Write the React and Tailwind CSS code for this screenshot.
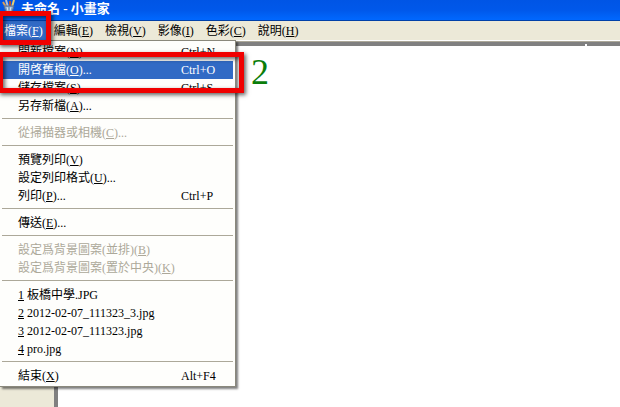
const MENUS = [
  { label: '檔案', hotkey: 'F' },
  { label: '編輯', hotkey: 'E' },
  { label: '檢視', hotkey: 'V' },
  { label: '影像', hotkey: 'I' },
  { label: '色彩', hotkey: 'C' },
  { label: '說明', hotkey: 'H' },
];

const FILE_GROUPS = [
  [
    { label: '開新檔案', hotkey: 'N', shortcut: 'Ctrl+N' },
    { label: '開啓舊檔', hotkey: 'O', more: true, shortcut: 'Ctrl+O', active: true },
    { label: '儲存檔案', hotkey: 'S', shortcut: 'Ctrl+S' },
    { label: '另存新檔', hotkey: 'A', more: true },
  ],
  [{ label: '從掃描器或相機', hotkey: 'C', more: true, disabled: true }],
  [
    { label: '預覽列印', hotkey: 'V' },
    { label: '設定列印格式', hotkey: 'U', more: true },
    { label: '列印', hotkey: 'P', more: true, shortcut: 'Ctrl+P' },
  ],
  [{ label: '傳送', hotkey: 'E', more: true }],
  [
    { label: '設定爲背景圖案(並排)', hotkey: 'B', disabled: true },
    { label: '設定爲背景圖案(置於中央)', hotkey: 'K', disabled: true },
  ],
  [
    { recent: '1', label: '板橋中學.JPG' },
    { recent: '2', label: '2012-02-07_111323_3.jpg' },
    { recent: '3', label: '2012-02-07_111323.jpg' },
    { recent: '4', label: 'pro.jpg' },
  ],
  [{ label: '結束', hotkey: 'X', shortcut: 'Alt+F4' }],
];

function PaintIcon() {
  return (
    <svg viewBox="0 0 16 16" className="size-4 shrink-0" aria-hidden="true">
      <path d="M2 2l3 5" stroke="#d9a05a" strokeWidth="2" />
      <path d="M5 0l2 7" stroke="#b8c4d0" strokeWidth="2" />
      <path d="M9 1v6" stroke="#b5532f" strokeWidth="2" />
      <path d="M13 0l-2 7" stroke="#e8cf72" strokeWidth="2" />
      <path d="M3 6h10l-2 6H5z" fill="#7fa3cc" stroke="#5a6f94" />
      <path d="M6 7l1 4M10 7l-1 4" stroke="#e6f0f8" />
    </svg>
  );
}

function Hotkey({ letter }) {
  return <>(<u className="underline-offset-1">{letter}</u>)</>;
}

function MenuItem({ item }) {
  const tone = item.active ? 'bg-[#316ac5] text-white' : item.disabled ? 'text-[#aca899]' : 'text-black';
  return (
    <button
      type="button"
      role="menuitem"
      disabled={item.disabled}
      className={`flex h-[18px] w-full items-center pr-5 pl-4 text-left ${tone}`}
    >
      <span className="flex-1">
        {item.recent && <><u className="underline-offset-1">{item.recent}</u>{' '}</>}
        {item.label}
        {item.hotkey && <Hotkey letter={item.hotkey} />}
        {item.more && '...'}
      </span>
      {item.shortcut && <span className="w-8">{item.shortcut}</span>}
    </button>
  );
}

function FileMenu() {
  return (
    <div
      role="menu"
      className="absolute top-full left-0 w-[236px] border border-l-0 border-[#8a887c] bg-[#fefefc] px-0.5 pt-0.5 pb-px shadow-[2px_2px_2px_#00000080]"
    >
      {FILE_GROUPS.map((group, i) => (
        <div key={i}>
          {i > 0 && <hr className="mt-[3px] mb-[5px] border-[#aca899]" />}
          {group.map((item) => <MenuItem key={item.label} item={item} />)}
        </div>
      ))}
    </div>
  );
}

export default function App() {
  return (
    <div className="relative flex min-h-screen flex-col overflow-hidden bg-white font-['Liberation_Serif','Noto_Sans_CJK_TC',serif] text-[12px] leading-[18px] whitespace-nowrap">
      <header className="flex h-[21px] items-start gap-1 border-b border-[#0040a8] bg-linear-to-b from-[#0055e5] via-[#0058ea] to-[#0068ff] pl-px text-white">
        <PaintIcon />
        <h1 className="text-[13px] leading-[18px] font-bold">未命名 - 小畫家</h1>
      </header>

      <nav className="relative z-10 flex h-5 border-b border-white bg-[#ece9d8]">
        {MENUS.map((menu, i) => (
          <button
            key={menu.hotkey}
            type="button"
            className={i === 0 ? 'bg-[#316ac5] pr-[5px] pl-1 text-white' : 'px-1.5 text-black'}
          >
            {menu.label}<Hotkey letter={menu.hotkey} />
          </button>
        ))}
        <FileMenu />
      </nav>

      <main className="flex flex-1 border-t border-[#aca899] bg-[#ece9d8]">
        <div className="w-[54px]" />
        <div className="relative flex-1 border-t-4 border-l-4 border-[#808080] bg-white">
          <div className="absolute -top-0.5 left-[527px] size-0.5 bg-white" />
        </div>
      </main>

      {/* step markers drawn over the window */}
      <div className="absolute top-[11px] -left-0.5 z-20 h-[34px] w-[53px] border-5 border-[#f00000] shadow-[2px_2px_4px_#00000099,inset_2px_2px_4px_#00000099]" />
      <div className="absolute top-[52px] -left-0.5 z-20 h-[41px] w-[246px] border-5 border-[#f00000] shadow-[2px_2px_4px_#00000099,inset_2px_2px_4px_#00000099]" />
      <span className="absolute top-[54px] left-[251px] z-20 text-[36px] leading-9 text-[#0a7d0a]">2</span>
    </div>
  );
}
